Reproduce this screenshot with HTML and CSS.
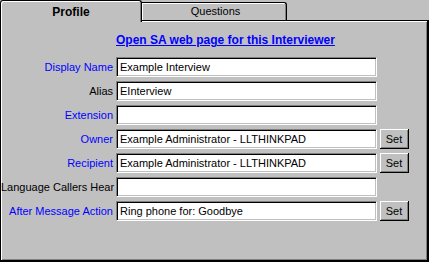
FILE: index.html
```html
<!DOCTYPE html>
<html lang="en">
<head>
  <meta charset="UTF-8">
  <title>Interviewer Profile</title>
  <link rel="stylesheet" href="styles.css">
</head>
<body>
  <div class="tabs">
    <div class="tab active">Profile</div>
    <div class="tab">Questions</div>
  </div>

  <section class="panel">
    <a href="#" class="sa-link">Open SA web page for this Interviewer</a>

    <div class="form-grid">
      <label class="field-label link-label">Display Name</label>
      <div class="text-box">Example Interview</div>
      <span></span>

      <label class="field-label">Alias</label>
      <div class="text-box">EInterview</div>
      <span></span>

      <label class="field-label link-label">Extension</label>
      <div class="text-box"></div>
      <span></span>

      <label class="field-label link-label">Owner</label>
      <div class="text-box">Example Administrator - LLTHINKPAD</div>
      <button class="set-btn">Set</button>

      <label class="field-label link-label">Recipient</label>
      <div class="text-box">Example Administrator - LLTHINKPAD</div>
      <button class="set-btn">Set</button>

      <label class="field-label">Language Callers Hear</label>
      <div class="text-box"></div>
      <span></span>

      <label class="field-label link-label">After Message Action</label>
      <div class="text-box">Ring phone for: Goodbye</div>
      <button class="set-btn">Set</button>
    </div>
  </section>
</body>
</html>
```

FILE: styles.css
```css
/* classic grey dialog */
body {
  margin: 0;
  background: #c0c0c0;
  font-family: "Liberation Sans", Arial, sans-serif;
  font-size: 11px;
  color: #000;
  width: 429px;
  height: 262px;
  overflow: hidden;
}

/* tab strip */
.tabs {
  display: flex;
  height: 22px;
}

.tab {
  box-sizing: border-box;
  width: 145px;
  height: 18px;
  margin-top: 2px;
  border-top: 1px solid #000;
  border-right: 1px solid #000;
  border-radius: 0 3px 0 0;
  box-shadow: inset 1px 1px #fff, inset -1px 0 #808080;
  text-align: center;
  line-height: 17px;
  padding-left: 3px;
}

.tab.active {
  width: 142px;
  height: 22px;
  margin-top: 0;
  padding-left: 0;
  border-left: 1px solid #000;
  border-radius: 3px 3px 0 0;
  font-weight: bold;
  font-size: 12px;
  line-height: 23px;
  background: #c0c0c0;
  position: relative;
  z-index: 1;
}

/* main panel */
.panel {
  box-sizing: border-box;
  height: 242px;
  margin-top: -2px;
  border-top: 1px solid #000;
  border-left: 1px solid #000;
  border-right: 2px solid #000;
  border-bottom: 2px solid #000;
  box-shadow: inset 1px 1px #fff, inset -1px -1px #808080;
  padding-top: 13px;
}

.sa-link {
  display: block;
  margin-left: 115px;
  height: 13px;
  line-height: 13px;
  color: #0000ff;
  font-weight: bold;
  font-size: 12px;
  text-decoration: underline;
  margin-bottom: 10px;
}

.form-grid {
  display: grid;
  grid-template-columns: 112px 261px 29px;
  grid-auto-rows: 20px;
  column-gap: 3px;
  row-gap: 4px;
}

.field-label {
  text-align: right;
  line-height: 20px;
  white-space: nowrap;
}

.link-label {
  color: #0000ff;
}

.text-box {
  box-sizing: border-box;
  height: 20px;
  background: #fff;
  border-top: 1px solid #808080;
  border-left: 1px solid #808080;
  border-right: 1px solid #fff;
  border-bottom: 1px solid #fff;
  box-shadow: inset 1px 1px #000, inset -1px -1px #c0c0c0;
  padding: 0 3px;
  line-height: 18px;
  white-space: nowrap;
  overflow: hidden;
}

.set-btn {
  box-sizing: border-box;
  height: 20px;
  margin: 0;
  padding: 0;
  background: #c0c0c0;
  border: none;
  border-right: 1px solid #000;
  border-bottom: 1px solid #000;
  box-shadow: inset 1px 1px #fff, inset -1px -1px #808080;
  font-family: inherit;
  font-size: 11px;
  color: #000;
}
```
